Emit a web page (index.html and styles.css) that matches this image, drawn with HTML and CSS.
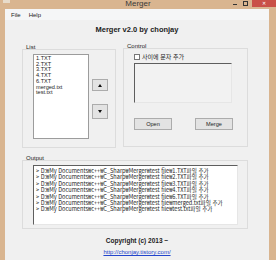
FILE: index.html
```html
<!DOCTYPE html>
<html lang="ko">
<head>
    <meta charset="UTF-8">
    <title>Merger</title>
    <link rel="stylesheet" href="styles.css">
</head>
<body>
<div class="window">
    <div class="titlebar">
        <span class="app-icon"></span>
        <span class="title">Merger</span>
        <span class="controls">
            <span class="min"></span>
            <span class="max"></span>
            <span class="close">&#x2715;</span>
        </span>
    </div>
    <div class="client">
        <div class="menubar">
            <span>File</span>
            <span>Help</span>
        </div>

        <h1>Merger v2.0 by chonjay</h1>

        <div class="top-row">
            <div class="group list-group">
                <div class="group-label">List</div>
                <div class="group-box">
                    <ul class="listbox">
                        <li>1.TXT</li>
                        <li>2.TXT</li>
                        <li>3.TXT</li>
                        <li>4.TXT</li>
                        <li>6.TXT</li>
                        <li>merged.txt</li>
                        <li>test.txt</li>
                    </ul>
                    <div class="move-buttons">
                        <button class="btn up-btn"><span class="arrow-up"></span></button>
                        <button class="btn down-btn"><span class="arrow-down"></span></button>
                    </div>
                </div>
            </div>

            <div class="group control-group">
                <div class="group-label">Control</div>
                <div class="group-box">
                    <label class="check-row"><span class="checkbox"></span>사이에 문자 추가</label>
                    <div class="textbox sep-box"></div>
                    <div class="action-buttons">
                        <button class="btn action-btn">Open</button>
                        <button class="btn action-btn">Merge</button>
                    </div>
                </div>
            </div>
        </div>

        <div class="group output-group">
            <div class="group-label">Output</div>
            <div class="group-box">
                <div class="textbox output-box">
                    <div>&gt; D:₩My Documents₩c++₩C_Sharp₩Merger₩test file₩1.TXT파일 추가</div>
                    <div>&gt; D:₩My Documents₩c++₩C_Sharp₩Merger₩test file₩2.TXT파일 추가</div>
                    <div>&gt; D:₩My Documents₩c++₩C_Sharp₩Merger₩test file₩3.TXT파일 추가</div>
                    <div>&gt; D:₩My Documents₩c++₩C_Sharp₩Merger₩test file₩4.TXT파일 추가</div>
                    <div>&gt; D:₩My Documents₩c++₩C_Sharp₩Merger₩test file₩6.TXT파일 추가</div>
                    <div>&gt; D:₩My Documents₩c++₩C_Sharp₩Merger₩test file₩merged.txt파일 추가</div>
                    <div>&gt; D:₩My Documents₩c++₩C_Sharp₩Merger₩test file₩test.txt파일 추가</div>
                </div>
            </div>
        </div>

        <div class="footer">
            <div class="copyright">Copyright (c) 2013 ~</div>
            <a class="site-link" href="#">http://chonjay.tistory.com/</a>
        </div>
    </div>
</div>
</body>
</html>
```

FILE: styles.css
```css
body {
    margin: 0;
    background: #d9b590;
    font-family: "Liberation Sans", "Noto Sans CJK KR", sans-serif;
    color: #222;
}
.window {
    width: 276px;
    height: 260px;
    overflow: hidden;
    display: flex;
    flex-direction: column;
}
.titlebar {
    height: 9px;
    display: flex;
    align-items: flex-start;
}
.app-icon {
    width: 7px;
    height: 3px;
    margin-left: 3px;
    background: #e8dccb;
}
.title {
    flex: 1;
    text-align: center;
    font-size: 8px;
    line-height: 8px;
    color: #3a3a3a;
    padding-left: 33px;
}
.controls {
    display: flex;
    align-items: flex-start;
    height: 7px;
}
.min {
    width: 4px;
    height: 1px;
    margin-top: 4px;
    margin-right: 6px;
    background: #333;
}
.max {
    width: 3px;
    height: 3px;
    margin-top: 1px;
    margin-right: 4px;
    border: 1px solid #333;
}
.close {
    width: 24px;
    height: 7px;
    background: #c94f47;
    color: #fff;
    font-size: 5px;
    line-height: 7px;
    text-align: center;
}
.client {
    flex: 1;
    margin: 0 7px 0 5px;
    background: #f0f0f0;
    padding: 0 0 0 17px;
    font-size: 6px;
}
.menubar {
    height: 11px;
    margin-left: -17px;
    padding-left: 6px;
    background: #f5f6f7;
    display: flex;
    gap: 8px;
    align-items: center;
    font-size: 6px;
}
h1 {
    margin: 5px 0 0 0;
    padding-right: 17px;
    font-size: 7.5px;
    line-height: 10px;
    text-align: center;
}
.top-row {
    display: flex;
    gap: 7px;
    margin-top: 9px;
}
.group-label {
    font-size: 6px;
    line-height: 6px;
    padding-left: 4px;
    margin-bottom: -1px;
}
.group-box {
    border: 1px solid #dcdcdc;
    box-sizing: border-box;
}
.list-group .group-box {
    width: 94px;
    height: 99px;
    display: flex;
    padding: 4px 0 0 10px;
    gap: 3px;
}
.listbox {
    list-style: none;
    margin: 0;
    padding: 1px 2px;
    width: 56px;
    height: 85px;
    box-sizing: border-box;
    background: #fff;
    border: 1px solid #9c9c9c;
    font-size: 5.6px;
    line-height: 5.7px;
}
.move-buttons {
    display: flex;
    flex-direction: column;
    padding-top: 25px;
    gap: 13px;
}
.btn {
    margin: 0;
    padding: 0;
    border: 1px solid #acacac;
    background: #e3e3e3;
    font-family: "Liberation Sans", sans-serif;
    color: #222;
    box-sizing: border-box;
}
.up-btn, .down-btn {
    width: 16px;
    display: flex;
    align-items: center;
    justify-content: center;
}
.up-btn {
    height: 12px;
}
.down-btn {
    height: 15px;
}
.arrow-up {
    border-left: 2px solid transparent;
    border-right: 2px solid transparent;
    border-bottom: 3px solid #111;
}
.arrow-down {
    border-left: 2px solid transparent;
    border-right: 2px solid transparent;
    border-top: 3px solid #111;
}
.control-group .group-box {
    width: 125px;
    height: 99px;
    padding: 4px 0 0 10px;
    margin-top: -1px;
}
.control-group .group-label {
    margin-top: -1px;
}
.check-row {
    display: flex;
    align-items: center;
    gap: 2px;
    height: 7px;
    font-size: 6px;
}
.checkbox {
    width: 6px;
    height: 6px;
    box-sizing: border-box;
    border: 1px solid #777;
    background: #fff;
}
.textbox {
    box-sizing: border-box;
    border-top: 1px solid #5e5e5e;
    border-left: 1px solid #5e5e5e;
    border-right: 1px solid #e6e6e6;
    border-bottom: 1px solid #e6e6e6;
}
.sep-box {
    width: 98px;
    height: 40px;
    margin-top: 3px;
    background: #f2f2f2;
}
.action-buttons {
    display: flex;
    gap: 23px;
    margin-top: 15px;
}
.action-btn {
    width: 38px;
    height: 12px;
    font-size: 5.6px;
}
.output-group {
    margin-top: 7px;
}
.output-group .group-box {
    width: 226px;
    height: 69px;
    padding: 4px 0 0 10px;
}
.output-box {
    width: 205px;
    height: 60px;
    background: #fff;
    padding: 2px 0 0 2px;
    font-family: "Noto Sans CJK KR", sans-serif;
    font-size: 5.6px;
    line-height: 6.4px;
    white-space: nowrap;
    overflow: hidden;
}
.output-box div {
    height: 6.4px;
}
.footer {
    padding-right: 17px;
    text-align: center;
    margin-top: 7px;
}
.copyright {
    font-weight: bold;
    font-size: 6.5px;
    line-height: 10px;
}
.site-link {
    display: inline-block;
    margin-top: 1px;
    font-size: 6px;
    line-height: 10px;
    color: #2244cc;
}
```
